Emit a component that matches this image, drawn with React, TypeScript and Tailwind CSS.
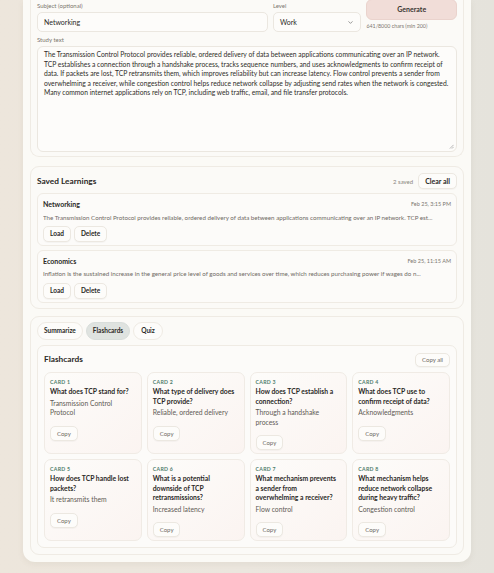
import { ChevronDown } from 'lucide-react';

const studyText =
  'The Transmission Control Protocol provides reliable, ordered delivery of data between applications communicating over an IP network. TCP establishes a connection through a handshake process, tracks sequence numbers, and uses acknowledgments to confirm receipt of data. If packets are lost, TCP retransmits them, which improves reliability but can increase latency. Flow control prevents a sender from overwhelming a receiver, while congestion control helps reduce network collapse by adjusting send rates when the network is congested. Many common internet applications rely on TCP, including web traffic, email, and file transfer protocols.';

const saved = [
  {
    title: 'Networking',
    date: 'Feb 25, 3:15 PM',
    preview:
      'The Transmission Control Protocol provides reliable, ordered delivery of data between applications communicating over an IP network. TCP est...',
  },
  {
    title: 'Economics',
    date: 'Feb 25, 11:15 AM',
    preview:
      'Inflation is the sustained increase in the general price level of goods and services over time, which reduces purchasing power if wages do n...',
  },
];

const cards = [
  { q: 'What does TCP stand for?', a: 'Transmission Control Protocol' },
  { q: 'What type of delivery does TCP provide?', a: 'Reliable, ordered delivery' },
  { q: 'How does TCP establish a connection?', a: 'Through a handshake process' },
  { q: 'What does TCP use to confirm receipt of data?', a: 'Acknowledgments' },
  { q: 'How does TCP handle lost packets?', a: 'It retransmits them' },
  { q: 'What is a potential downside of TCP retransmissions?', a: 'Increased latency' },
  { q: 'What mechanism prevents a\u00a0sender from overwhelming a receiver?', a: 'Flow control' },
  { q: 'What mechanism helps reduce network collapse during heavy traffic?', a: 'Congestion control' },
];

function SmallButton({ children, className = '' }: { children: React.ReactNode; className?: string }) {
  return (
    <button
      className={`rounded-[5px] border border-[#ece8e1] bg-[#fdfcfa] px-[6px] text-[#2b2926] shadow-[0_1px_1px_rgba(0,0,0,0.03)] ${className}`}
    >
      {children}
    </button>
  );
}

export default function App() {
  return (
    <div
      className="min-h-[573px] bg-gradient-to-r from-[#ede6dc] via-[#ebe6de] to-[#e5e3dc] px-[23px] pb-[10px] text-[#2b2926]"
      style={{ fontFamily: 'Lato, "Open Sans", sans-serif' }}
    >
      <div className="rounded-b-[12px] bg-[#fbfaf6] px-[7px] pb-[7px] shadow-[0_2px_6px_rgba(120,100,80,0.08)]">
        {/* form */}
        <div className="rounded-b-[9px] border border-t-0 border-[#efebe4] bg-[#fbfaf7] px-[6px] pb-[4px] pt-[2px]">
          <div className="flex gap-[5px]">
            <div className="flex w-[232px] flex-col">
              <span className="text-[6px] leading-[8px] text-[#7b766f]">Subject (optional)</span>
              <div className="mt-[2px] flex h-[20px] items-center rounded-[5px] border border-[#ebe7e0] bg-[#fdfcfa] px-[6px] text-[7px]">
                Networking
              </div>
            </div>
            <div className="flex w-[89px] flex-col">
              <span className="text-[6px] leading-[8px] text-[#7b766f]">Level</span>
              <div className="mt-[2px] flex h-[20px] items-center justify-between rounded-[5px] border border-[#ebe7e0] bg-[#fdfcfa] px-[6px] text-[7px]">
                Work
                <ChevronDown className="h-[7px] w-[7px] text-[#555]" strokeWidth={2} />
              </div>
            </div>
            <div className="-mt-[3px] flex w-[91px] flex-col">
              <button className="h-[21px] rounded-[6px] border border-[#ead3cd] bg-[#f1ddd8] text-[7px] font-bold text-[#3a3532]">
                Generate
              </button>
              <span className="mt-[3px] text-[5.3px] text-[#7b766f]">641/8000 chars (min 200)</span>
            </div>
          </div>
          <div className="mt-[4px] text-[6px] leading-[8px] text-[#7b766f]">Study text</div>
          <div className="relative mt-[2px] h-[106px] rounded-[6px] border border-[#ebe7e0] bg-[#fdfcfa] px-[6px] pt-[3px] text-[6.75px] leading-[9.5px] text-[#2f2c29]">
            {studyText}
            <svg className="absolute bottom-[2px] right-[2px] h-[5px] w-[5px]" viewBox="0 0 6 6">
              <path d="M5.5 1 L1 5.5 M5.5 3.5 L3.5 5.5" stroke="#888" strokeWidth="0.7" />
            </svg>
          </div>
        </div>

        {/* saved learnings */}
        <div className="mt-[9px] rounded-[9px] border border-[#efebe4] bg-[#fbfaf7] px-[6px] pb-[5px] pt-[6px]">
          <div className="flex items-center justify-between">
            <span className="text-[8.3px] font-bold text-[#2b2926]">Saved Learnings</span>
            <div className="flex items-center gap-[5px]">
              <span className="text-[6px] text-[#8a857e]">2 saved</span>
              <SmallButton className="h-[16px] text-[7px] font-bold">Clear all</SmallButton>
            </div>
          </div>
          <div className="mt-[4px] flex flex-col gap-[4px]">
            {saved.map((s) => (
              <div key={s.title} className="rounded-[6px] border border-[#efebe4] bg-[#fcfbf9] px-[5px] pb-[3px] pt-[5px]">
                <div className="flex items-center justify-between">
                  <span className="text-[7px] font-bold">{s.title}</span>
                  <span className="text-[5.5px] text-[#7b766f]">{s.date}</span>
                </div>
                <div className="mt-[3px] truncate text-[6.2px] text-[#6f6a64]">{s.preview}</div>
                <div className="mt-[4px] flex gap-[3px]">
                  <SmallButton className="h-[16px] text-[6.5px] font-bold">Load</SmallButton>
                  <SmallButton className="h-[16px] text-[6.5px] font-bold">Delete</SmallButton>
                </div>
              </div>
            ))}
          </div>
        </div>

        {/* results */}
        <div className="mt-[7px] rounded-[9px] border border-[#efebe4] bg-[#fbfaf7] px-[6px] pb-[6px] pt-[5px]">
          <div className="flex gap-[3px]">
            <button className="h-[18px] rounded-full border border-[#efebe4] bg-[#fdfcfa] px-[6px] text-[6.5px] font-bold">
              Summarize
            </button>
            <button className="h-[18px] rounded-full border border-[#d9dedb] bg-[#dfe3e0] px-[6px] text-[6.5px] font-bold">
              Flashcards
            </button>
            <button className="h-[18px] rounded-full border border-[#efebe4] bg-[#fdfcfa] px-[7px] text-[6.5px] font-bold">
              Quiz
            </button>
          </div>
          <div className="mt-[5px] rounded-[7px] border border-[#efebe4] bg-[#fcfbf9] px-[6px] pb-[6px] pt-[7px]">
            <div className="flex items-center justify-between">
              <span className="text-[8.3px] font-bold">Flashcards</span>
              <SmallButton className="h-[14px] text-[6px] text-[#6f6a64]">Copy all</SmallButton>
            </div>
            <div className="mt-[5px] grid grid-cols-4 gap-[5px]">
              {cards.map((c, i) => (
                <div
                  key={i}
                  className="h-[82px] rounded-[7px] border border-[#f0ebe5] bg-gradient-to-br from-[#fdfcfa] to-[#fbf4f1] px-[5px] pt-[6px]"
                >
                  <div className="text-[5.2px] font-bold tracking-[0.3px] text-[#4f7d6c]">CARD {i + 1}</div>
                  <div className="mt-[1px] text-[6.8px] font-bold leading-[9.5px] text-[#2b2926]">{c.q}</div>
                  <div className="mt-[2px] text-[6.8px] leading-[9.5px] text-[#5f5a55]">{c.a}</div>
                  <SmallButton className="mt-[6px] h-[15px] text-[6px] text-[#6f6a64]">Copy</SmallButton>
                </div>
              ))}
            </div>
          </div>
        </div>
      </div>
    </div>
  );
}
